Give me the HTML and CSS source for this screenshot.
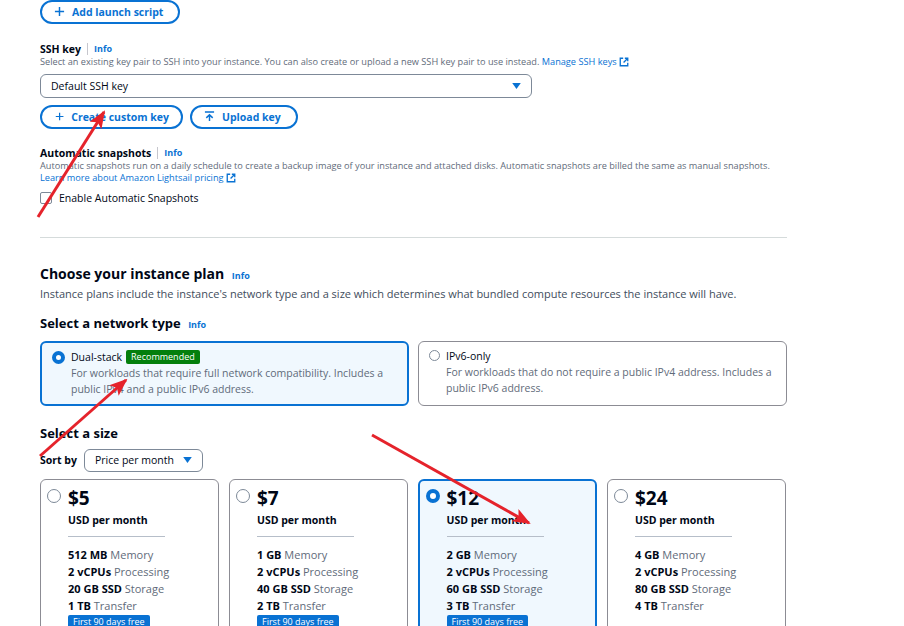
FILE: index.html
```html
<!DOCTYPE html>
<html lang="en">
<head>
  <meta charset="UTF-8">
  <title>Create instance</title>
  <link rel="stylesheet" href="styles.css">
</head>
<body>
  <div class="page">
    <button class="btn btn-launch">
      <svg class="ico" viewBox="0 0 12 12"><path d="M6 1v10M1 6h10"/></svg>
      Add launch script
    </button>

    <div class="label-row ssh-label">
      <span class="label">SSH key</span><span class="sep"></span><a class="info">Info</a>
    </div>
    <p class="hint">Select an existing key pair to SSH into your instance. You can also create or upload a new SSH key pair to use instead. <a class="link">Manage SSH keys <svg class="ext" viewBox="0 0 12 12"><path d="M5 1.5H1.5v9h9V7M7 1.5h3.5V5M10.5 1.5 5.5 6.5"/></svg></a></p>

    <div class="select select-ssh">
      <span>Default SSH key</span>
      <svg class="caret" viewBox="0 0 10 7"><path d="M0 0h10L5 7z"/></svg>
    </div>

    <div class="btn-row">
      <button class="btn btn-create">
        <svg class="ico" viewBox="0 0 12 12"><path d="M6 1v10M1 6h10"/></svg>
        Create custom key
      </button>
      <button class="btn btn-upload">
        <svg class="ico" viewBox="0 0 12 12"><path d="M1 1h10M6 11V4M2.5 7.5 6 4l3.5 3.5"/></svg>
        Upload key
      </button>
    </div>

    <div class="label-row snap-label">
      <span class="label">Automatic snapshots</span><span class="sep"></span><a class="info">Info</a>
    </div>
    <p class="hint">Automatic snapshots run on a daily schedule to create a backup image of your instance and attached disks. Automatic snapshots are billed the same as manual snapshots.<br>
      <a class="link">Learn more about Amazon Lightsail pricing <svg class="ext" viewBox="0 0 12 12"><path d="M5 1.5H1.5v9h9V7M7 1.5h3.5V5M10.5 1.5 5.5 6.5"/></svg></a></p>

    <label class="check-row"><span class="checkbox"></span>Enable Automatic Snapshots</label>

    <hr class="divider">

    <h2 class="plan-title">Choose your instance plan <a class="info">Info</a></h2>
    <p class="plan-desc">Instance plans include the instance's network type and a size which determines what bundled compute resources the instance will have.</p>

    <h3 class="sub-title">Select a network type <a class="info">Info</a></h3>
    <div class="net-grid">
      <div class="net-card selected">
        <span class="radio on"></span>
        <div>
          <div class="net-name">Dual-stack <span class="badge green">Recommended</span></div>
          <p class="net-desc">For workloads that require full network compatibility. Includes a public IPv4 and a public IPv6 address.</p>
        </div>
      </div>
      <div class="net-card">
        <span class="radio"></span>
        <div>
          <div class="net-name">IPv6-only</div>
          <p class="net-desc">For workloads that do not require a public IPv4 address. Includes a public IPv6 address.</p>
        </div>
      </div>
    </div>

    <h3 class="sub-title size-title">Select a size</h3>
    <div class="sort-row">
      <span class="sort-label">Sort by</span>
      <div class="select select-sort">
        <span>Price per month</span>
        <svg class="caret" viewBox="0 0 10 7"><path d="M0 0h10L5 7z"/></svg>
      </div>
    </div>

    <div class="size-grid">
      <div class="size-card">
        <span class="radio"></span>
        <div class="size-body">
          <div class="price">$5</div>
          <div class="per">USD per month</div>
          <div class="size-line"></div>
          <ul class="specs">
            <li><b>512 MB</b> Memory</li>
            <li><b>2 vCPUs</b> Processing</li>
            <li><b>20 GB SSD</b> Storage</li>
            <li><b>1 TB</b> Transfer</li>
          </ul>
          <span class="badge blue">First 90 days free</span>
        </div>
      </div>
      <div class="size-card">
        <span class="radio"></span>
        <div class="size-body">
          <div class="price">$7</div>
          <div class="per">USD per month</div>
          <div class="size-line"></div>
          <ul class="specs">
            <li><b>1 GB</b> Memory</li>
            <li><b>2 vCPUs</b> Processing</li>
            <li><b>40 GB SSD</b> Storage</li>
            <li><b>2 TB</b> Transfer</li>
          </ul>
          <span class="badge blue">First 90 days free</span>
        </div>
      </div>
      <div class="size-card selected">
        <span class="radio on"></span>
        <div class="size-body">
          <div class="price">$12</div>
          <div class="per">USD per month</div>
          <div class="size-line"></div>
          <ul class="specs">
            <li><b>2 GB</b> Memory</li>
            <li><b>2 vCPUs</b> Processing</li>
            <li><b>60 GB SSD</b> Storage</li>
            <li><b>3 TB</b> Transfer</li>
          </ul>
          <span class="badge blue">First 90 days free</span>
        </div>
      </div>
      <div class="size-card">
        <span class="radio"></span>
        <div class="size-body">
          <div class="price">$24</div>
          <div class="per">USD per month</div>
          <div class="size-line"></div>
          <ul class="specs">
            <li><b>4 GB</b> Memory</li>
            <li><b>2 vCPUs</b> Processing</li>
            <li><b>80 GB SSD</b> Storage</li>
            <li><b>4 TB</b> Transfer</li>
          </ul>
        </div>
      </div>
    </div>
  </div>

  <!-- red annotation arrows drawn over the screenshot -->
  <svg class="arrows" width="904" height="626" viewBox="0 0 904 626">
    <defs>
      <marker id="head" markerUnits="userSpaceOnUse" markerWidth="18" markerHeight="14" refX="16" refY="7" orient="auto">
        <path d="M0 0 18 7 0 14 4 7z" fill="#e5232b"/>
      </marker>
    </defs>
    <line x1="38" y1="217" x2="104" y2="112" marker-end="url(#head)"/>
    <line x1="40" y1="456" x2="126" y2="380" marker-end="url(#head)"/>
    <line x1="372" y1="435" x2="529" y2="523" marker-end="url(#head)"/>
  </svg>
</body>
</html>
```

FILE: styles.css
```css
body {
  margin: 0;
  font-family: 'Open Sans', 'Noto Sans', sans-serif;
  color: #000716;
  background: #fff;
  overflow: hidden;
}
.page {
  width: 747px;
  padding-left: 40px;
}
p {
  margin: 0;
}
a {
  color: #0972d3;
  text-decoration: none;
}
.btn {
  display: inline-flex;
  align-items: center;
  gap: 7px;
  height: 24px;
  padding: 0 12px;
  border: 2px solid #0972d3;
  border-radius: 14px;
  background: #fff;
  color: #0972d3;
  font-family: inherit;
  font-size: 10.5px;
  font-weight: 700;
  white-space: nowrap;
}
.btn-launch {
  margin-top: -5px;
  width: 140px;
}
.btn-create {
  width: 143px;
  padding-left: 13px;
}
.btn-upload {
  width: 108px;
}
.ico {
  width: 11px;
  height: 11px;
  fill: none;
  stroke: #0972d3;
  stroke-width: 1.6;
}
.label-row {
  display: flex;
  align-items: center;
  height: 14px;
}
.ssh-label {
  margin-top: 18px;
}
.snap-label {
  margin-top: 17px;
}
.label {
  font-size: 10.5px;
  font-weight: 700;
}
.sep {
  width: 1px;
  height: 12px;
  background: #c6c6cd;
  margin: 0 6px;
}
.info {
  font-size: 9px;
  font-weight: 700;
}
.hint {
  font-size: 9.2px;
  line-height: 12px;
  color: #5f6b7a;
}
.link {
  color: #0972d3;
}
.ext {
  width: 10px;
  height: 10px;
  vertical-align: -2px;
  fill: none;
  stroke: #0972d3;
  stroke-width: 1.6;
}
.select {
  display: flex;
  align-items: center;
  justify-content: space-between;
  box-sizing: border-box;
  border: 1.5px solid #7d8998;
  border-radius: 6px;
  font-size: 10.5px;
}
.select-ssh {
  width: 492px;
  height: 24px;
  margin-top: 6px;
  padding: 0 10px;
}
.caret {
  width: 9px;
  height: 6px;
  fill: #0972d3;
}
.btn-row {
  display: flex;
  gap: 7px;
  margin-top: 7px;
}
.check-row {
  display: flex;
  align-items: center;
  gap: 7px;
  height: 14px;
  margin-top: 7px;
  font-size: 10.5px;
}
.checkbox {
  width: 10px;
  height: 10px;
  border: 1.5px solid #7d8998;
  border-radius: 2px;
}
.divider {
  border: 0;
  border-top: 1px solid #d5dbdb;
  margin: 32px 0 0;
}
.plan-title {
  margin: 26px 0 0;
  font-size: 14px;
  line-height: 20px;
}
.plan-title .info,
.sub-title .info {
  margin-left: 4px;
}
.plan-desc {
  margin-top: 1px;
  font-size: 11px;
  line-height: 14px;
  color: #414d5c;
}
.sub-title {
  margin: 13px 0 0;
  font-size: 13px;
  line-height: 18px;
}
.net-grid {
  display: grid;
  grid-template-columns: 1fr 1fr;
  gap: 9px;
  margin-top: 7px;
}
.net-card {
  display: flex;
  gap: 6px;
  height: 65px;
  box-sizing: border-box;
  padding: 6px 10px 0 10px;
  border: 1.5px solid #8c8c94;
  border-radius: 6px;
}
.net-card.selected {
  border: 2px solid #0972d3;
  background: #f0f8fe;
}
.radio {
  flex: none;
  width: 9px;
  height: 9px;
  margin-top: 2px;
  border: 1.5px solid #7d8998;
  border-radius: 50%;
  background: #fff;
}
.radio.on {
  width: 5px;
  height: 5px;
  border: 4px solid #0972d3;
}
.net-name {
  display: flex;
  align-items: center;
  gap: 4px;
  font-size: 10.5px;
  line-height: 16px;
}
.net-desc {
  font-size: 10.5px;
  line-height: 16px;
  color: #5f6b7a;
}
.badge {
  display: inline-block;
  color: #fff;
  font-size: 9px;
  line-height: 14px;
  padding: 0 5px;
  border-radius: 2px;
}
.badge.green {
  background: #037f0c;
}
.badge.blue {
  display: block;
  width: max-content;
  background: #0972d3;
  margin-top: 1px;
}
.size-title {
  margin-top: 18px;
}
.sort-row {
  display: flex;
  align-items: center;
  gap: 7px;
  margin-top: 7px;
}
.sort-label {
  font-size: 10.5px;
  font-weight: 700;
}
.select-sort {
  width: 119px;
  height: 23px;
  padding: 0 10px;
}
.size-grid {
  display: grid;
  grid-template-columns: repeat(4, 1fr);
  gap: 10px;
  width: 746px;
  margin-top: 7px;
}
.size-card {
  display: flex;
  gap: 7px;
  height: 170px;
  box-sizing: border-box;
  padding: 7px 6px 0 6px;
  border: 1.5px solid #8c8c94;
  border-radius: 6px;
}
.size-card.selected {
  padding: 6.5px 5.5px 0 5.5px;
  border: 2px solid #0972d3;
  background: #f0f8fe;
}
.size-card .radio {
  width: 12px;
  height: 12px;
  margin-top: 2px;
}
.size-card .radio.on {
  width: 6px;
  height: 6px;
  border-width: 4.5px;
}
.size-body {
  flex: 1;
}
.price {
  font-size: 19px;
  font-weight: 700;
  line-height: 22px;
}
.per {
  margin-top: 4px;
  font-size: 10.5px;
  font-weight: 700;
  line-height: 14px;
}
.size-line {
  width: 97px;
  height: 1px;
  margin-top: 9px;
  background: #b6bec9;
}
.specs {
  list-style: none;
  margin: 9px 0 0;
  padding: 0;
  font-size: 11px;
  line-height: 17px;
  color: #5f6b7a;
}
.specs b {
  color: #000716;
}
.arrows {
  position: absolute;
  left: 0;
  top: 0;
  pointer-events: none;
}
.arrows line {
  stroke: #e5232b;
  stroke-width: 3;
}
```
